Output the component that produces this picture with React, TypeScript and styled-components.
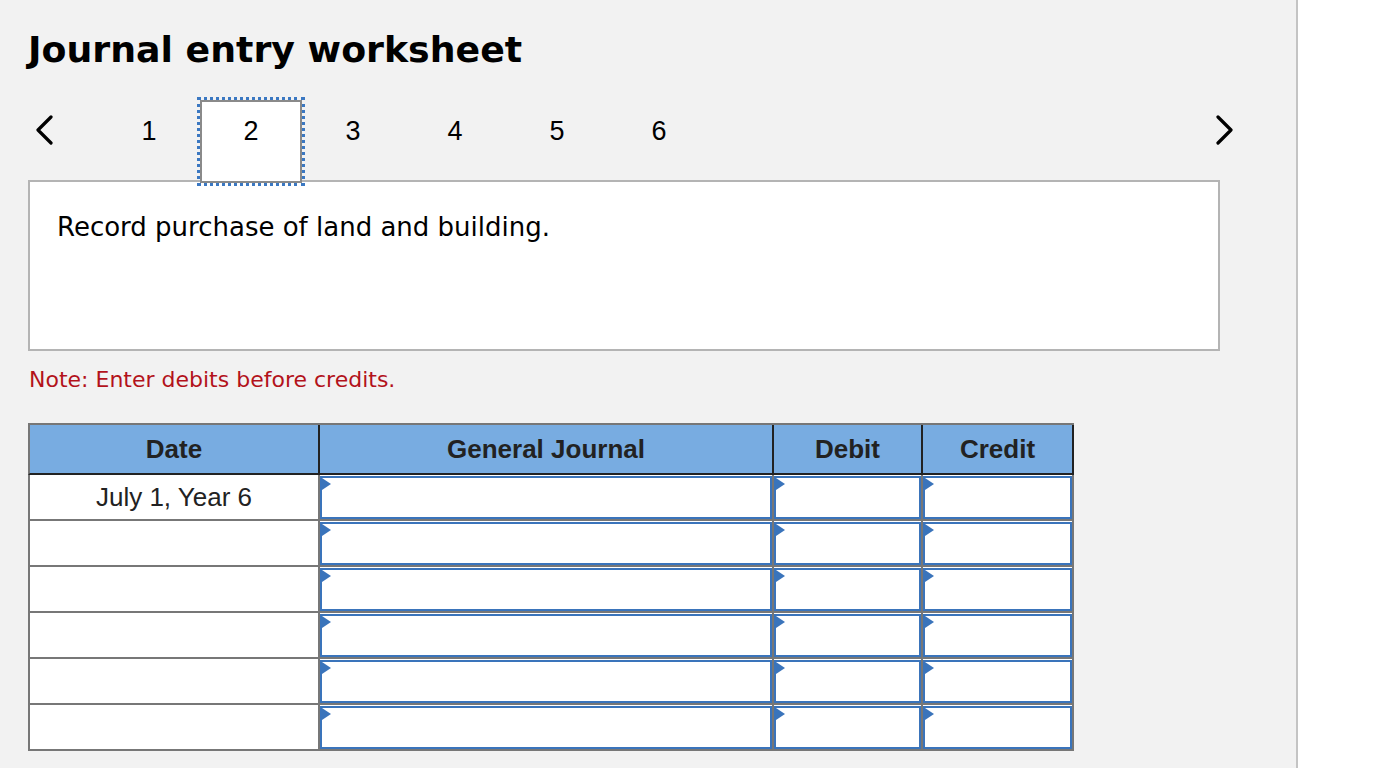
import styled, { createGlobalStyle } from 'styled-components';

const GlobalStyle = createGlobalStyle`
    html, body {
        margin: 0;
        padding: 0;
        background: #ffffff;
    }
    * {
        box-sizing: border-box;
    }
`;

const Page = styled.div`
    display: flex;
    min-height: 768px;
`;

const Panel = styled.div`
    width: 1298px;
    min-height: 768px;
    background-color: #f2f2f2;
    border-right: 2px solid #c4c4c4;
    padding: 28px 0 0 28px;
`;

const Title = styled.h1`
    margin: 0;
    font-family: 'DejaVu Sans', Verdana, sans-serif;
    font-weight: bold;
    font-size: 36.3px;
    line-height: 44px;
    color: #000;
`;

const Pager = styled.div`
    position: relative;
    z-index: 1;
    display: flex;
    align-items: flex-start;
    width: 1206px;
    margin-top: 28px;
`;

const Arrow = styled.button`
    display: flex;
    align-items: center;
    justify-content: center;
    width: 20px;
    height: 30px;
    margin-top: 15px;
    padding: 0;
    border: none;
    background: transparent;
    cursor: pointer;

    &.prev {
        margin-left: 7px;
    }

    &.next {
        margin-left: auto;
    }
`;

const Pages = styled.div`
    display: flex;
    margin-left: 43px;
`;

const PageItem = styled.div<{ $active?: boolean }>`
    width: 102px;
    height: 83px;
    padding-top: 14px;
    text-align: center;
    font-family: 'Liberation Sans', Arial, sans-serif;
    font-size: 27px;
    line-height: 30px;
    color: #000;
    border: 2px solid ${(p) => (p.$active ? '#8a8a8a' : 'transparent')};
    background: ${(p) => (p.$active ? '#ffffff' : 'transparent')};
    outline: ${(p) => (p.$active ? '3px dotted #3b78c2' : 'none')};
    outline-offset: 0px;
`;

const Description = styled.div`
    width: 1192px;
    height: 171px;
    margin-top: -3px;
    background: #ffffff;
    border: 2px solid #b4b4b4;
    padding: 29px 0 0 27px;
    font-family: 'DejaVu Sans', Verdana, sans-serif;
    font-size: 26px;
    line-height: 32px;
    color: #000;
`;

const Note = styled.p`
    margin: 16px 0 0 1px;
    font-family: 'DejaVu Sans', Verdana, sans-serif;
    font-size: 22px;
    line-height: 26px;
    color: #b3121b;
`;

const Table = styled.div`
    display: grid;
    grid-template-columns: 290px 454px 149px 153px;
    width: 1046px;
    margin-top: 30px;
    border-top: 2px solid #777777;
`;

const HeadCell = styled.div<{ $first?: boolean; $last?: boolean }>`
    display: flex;
    align-items: center;
    justify-content: center;
    height: 50px;
    background-color: #78ace1;
    border-left: 2px solid ${(p) => (p.$first ? '#777777' : '#222222')};
    border-right: ${(p) => (p.$last ? '2px solid #222222' : 'none')};
    border-bottom: 2px solid #222222;
    font-family: 'Liberation Sans', Arial, sans-serif;
    font-weight: bold;
    font-size: 26px;
    color: #222222;
`;

const DateCell = styled.div`
    display: flex;
    align-items: center;
    justify-content: center;
    height: 46px;
    background: #ffffff;
    border-left: 2px solid #777777;
    border-bottom: 2px solid #777777;
    font-family: 'Liberation Sans', Arial, sans-serif;
    font-size: 26px;
    color: #222222;
`;

const EntryCell = styled.div<{ $last?: boolean }>`
    height: 46px;
    padding-top: 1px;
    background: #ffffff;
    border-left: 2px solid #777777;
    border-right: ${(p) => (p.$last ? '2px solid #777777' : 'none')};
    border-bottom: 2px solid #777777;
`;

const EntryInput = styled.div`
    position: relative;
    height: 100%;
    border: 2.5px solid #3a74bb;
    background: #ffffff;

    &::before {
        content: '';
        position: absolute;
        top: 0;
        left: 0;
        width: 0;
        height: 0;
        border-top: 6px solid transparent;
        border-bottom: 6px solid transparent;
        border-left: 9px solid #3a74bb;
    }
`;

const Chevron = ({ dir }: { dir: 'left' | 'right' }) => (
    <svg width="20" height="30" viewBox="0 0 20 30">
        <path
            d={dir === 'left' ? 'M16 2 L3 15 L16 28' : 'M4 2 L17 15 L4 28'}
            fill="none"
            stroke="#000"
            strokeWidth="3.2"
            strokeLinecap="round"
            strokeLinejoin="round"
        />
    </svg>
);

const rows = ['July 1, Year 6', '', '', '', '', ''];

const App = () => {
    return (
        <Page>
            <GlobalStyle />
            <Panel>
                <Title>Journal entry worksheet</Title>

                <Pager>
                    <Arrow className="prev" aria-label="previous">
                        <Chevron dir="left" />
                    </Arrow>
                    <Pages>
                        {[1, 2, 3, 4, 5, 6].map((n) => (
                            <PageItem key={n} $active={n === 2}>
                                {n}
                            </PageItem>
                        ))}
                    </Pages>
                    <Arrow className="next" aria-label="next">
                        <Chevron dir="right" />
                    </Arrow>
                </Pager>

                <Description>Record purchase of land and building.</Description>

                <Note>Note: Enter debits before credits.</Note>

                <Table>
                    <HeadCell $first>Date</HeadCell>
                    <HeadCell>General Journal</HeadCell>
                    <HeadCell>Debit</HeadCell>
                    <HeadCell $last>Credit</HeadCell>
                    {rows.map((date, i) => (
                        <>
                            <DateCell key={`d${i}`}>{date}</DateCell>
                            <EntryCell key={`j${i}`}>
                                <EntryInput />
                            </EntryCell>
                            <EntryCell key={`db${i}`}>
                                <EntryInput />
                            </EntryCell>
                            <EntryCell key={`cr${i}`} $last>
                                <EntryInput />
                            </EntryCell>
                        </>
                    ))}
                </Table>
            </Panel>
        </Page>
    );
};

export default App;
